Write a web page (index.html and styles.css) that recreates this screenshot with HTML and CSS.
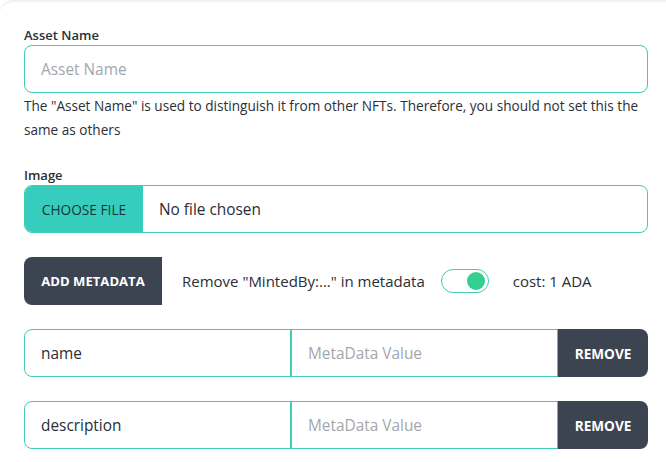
FILE: index.html
```html
<!DOCTYPE html>
<html>
<head>
<meta charset="utf-8">
<link rel="stylesheet" href="styles.css">
</head>
<body>
<div class="card">
  <div class="field">
    <label class="label">Asset Name</label>
    <input class="input" type="text" placeholder="Asset Name">
    <p class="help">The "Asset Name" is used to distinguish it from other NFTs. Therefore, you should not set this the same as others</p>
  </div>
  <div class="field image-field">
    <label class="label">Image</label>
    <div class="file">
      <span class="file-btn">CHOOSE FILE</span>
      <span class="file-name">No file chosen</span>
    </div>
  </div>
  <div class="meta-bar">
    <button class="btn-dark add">ADD METADATA</button>
    <span class="meta-text">Remove "MintedBy:..." in metadata</span>
    <span class="toggle"><span class="knob"></span></span>
    <span class="cost">cost: 1 ADA</span>
  </div>
  <div class="meta-row">
    <input class="mi key" type="text" value="name">
    <input class="mi val" type="text" placeholder="MetaData Value">
    <button class="btn-dark remove">REMOVE</button>
  </div>
  <div class="meta-row">
    <input class="mi key" type="text" value="description">
    <input class="mi val" type="text" placeholder="MetaData Value">
    <button class="btn-dark remove">REMOVE</button>
  </div>
</div>
</body>
</html>
```
FILE: styles.css
```css
* { box-sizing: border-box; }
html, body { margin: 0; padding: 0; background: #fff; }
body {
  font-family: "Open Sans", "Liberation Sans", sans-serif;
  color: #2a2e35;
  width: 666px;
  height: 462px;
  overflow: hidden;
}
.card {
  padding: 24px 18px 0 24px;
  border-top: 2px solid #f3f1f7;
  border-top-left-radius: 14px;
  border-left: 1px solid #f7f6fa;
  margin-left: -1px;
}
.field { display: flex; flex-direction: column; }
.label {
  font-size: 13px;
  font-weight: 600;
  line-height: 19px;
  color: #2b2f36;
}
.input {
  height: 48px;
  border: 1px solid #3ecdb0;
  border-radius: 8px;
  padding: 0 16px;
  font-family: inherit;
  font-size: 15.4px;
  outline: none;
  color: #2a2e35;
}
.input::placeholder, .mi::placeholder { color: #a3a7ad; }
.help {
  margin: 1px 0 0 0;
  font-size: 13.6px;
  line-height: 24px;
  color: #2b2f36;
}
.image-field { margin-top: 24px; }
.file {
  display: flex;
  height: 48px;
  border: 1px solid #3ecdb0;
  border-radius: 8px;
  overflow: hidden;
  align-items: stretch;
}
.file-btn {
  background: #37cdbe;
  color: #163835;
  font-size: 13.7px;
  font-weight: 500;
  display: flex;
  align-items: center;
  width: 118px;
  justify-content: center;
}
.file-name {
  display: flex;
  align-items: center;
  padding-left: 16px;
  font-size: 15.4px;
  color: #2a2e35;
}
.meta-bar {
  display: flex;
  align-items: center;
  margin-top: 24px;
  height: 48px;
}
.btn-dark {
  background: #3d4451;
  color: #fff;
  border: none;
  font-family: inherit;
  font-weight: 700;
  padding: 0;
  height: 48px;
}
.add {
  width: 138px;
  font-size: 13.1px;
  border-radius: 8px 0 0 8px;
}
.meta-text {
  margin-left: 20px;
  font-size: 15px;
  color: #2a2e35;
}
.toggle {
  margin-left: 16px;
  width: 48px;
  height: 24px;
  border: 1px solid #3ecdb0;
  border-radius: 12px;
  display: flex;
  align-items: center;
  justify-content: flex-end;
  padding-right: 3px;
}
.knob {
  width: 18px;
  height: 18px;
  border-radius: 50%;
  background: #34cf8f;
}
.cost {
  margin-left: 24px;
  font-size: 15px;
  color: #2a2e35;
}
.meta-row {
  display: flex;
  margin-top: 24px;
  height: 48px;
}
.mi {
  height: 48px;
  border: 1px solid #3ecdb0;
  font-family: inherit;
  font-size: 15.4px;
  padding: 0 16px;
  outline: none;
  color: #2a2e35;
  min-width: 0;
}
.key { width: 267px; border-radius: 8px 0 0 8px; }
.val { width: 267px; }
.remove {
  width: 90px;
  font-size: 13.6px;
  border-radius: 0 8px 8px 0;
}
```
